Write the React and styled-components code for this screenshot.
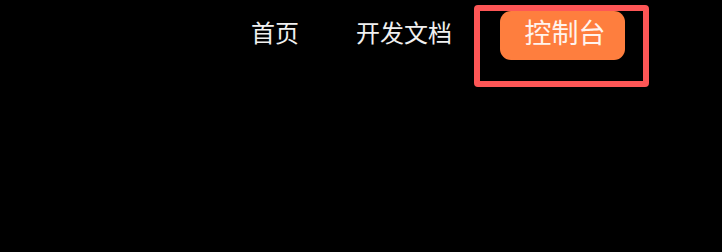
import React from "react";
import styled, { createGlobalStyle } from "styled-components";

const GlobalStyle = createGlobalStyle`
  html, body {
    margin: 0;
    padding: 0;
    background: #000;
  }
  body {
    font-family: "Noto Sans CJK SC", "Noto Sans", sans-serif;
  }
`;

const Page = styled.div`
  width: 722px;
  height: 252px;
  background: #000;
  box-sizing: border-box;
`;

const Header = styled.header`
  display: flex;
  justify-content: flex-end;
  align-items: flex-start;
  padding: 5px 73px 0 0;
`;

const Nav = styled.nav`
  display: flex;
  align-items: flex-start;
`;

const NavLink = styled.a`
  display: block;
  margin-top: 6px;
  height: 49px;
  line-height: 42px;
  font-size: 24px;
  color: #f0f0f0;
  text-decoration: none;
  margin-right: ${(p) => p.$gap}px;
  white-space: nowrap;
`;

const Highlight = styled.div`
  border: 6px solid #fd5656;
  border-radius: 4px;
  padding: 0 18px 21px 20px;
`;

const ConsoleButton = styled.a`
  display: flex;
  justify-content: center;
  width: 125px;
  height: 49px;
  box-sizing: border-box;
  padding-left: 5px;
  line-height: 41px;
  border-radius: 11px;
  background: #fe7e3e;
  color: #fff4ee;
  font-size: 27px;
  text-decoration: none;
  white-space: nowrap;
`;

export default function App() {
  return (
    <Page>
      <GlobalStyle />
      <Header>
        <Nav>
          <NavLink href="#" $gap={57}>首页</NavLink>
          <NavLink href="#" $gap={22}>开发文档</NavLink>
          <Highlight>
            <ConsoleButton href="#">控制台</ConsoleButton>
          </Highlight>
        </Nav>
      </Header>
    </Page>
  );
}
